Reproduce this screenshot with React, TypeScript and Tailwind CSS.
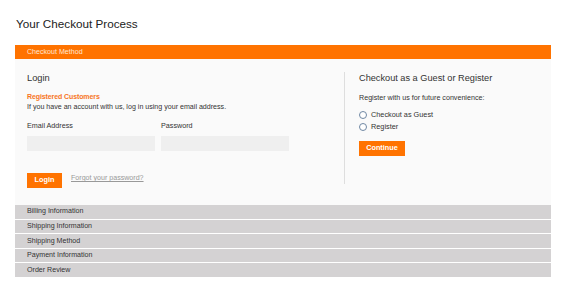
import React from "react";

const steps = [
  "Billing Information",
  "Shipping Information",
  "Shipping Method",
  "Payment Information",
  "Order Review",
];

function Radio({ label }: { label: string }) {
  return (
    <label className="flex items-center gap-[4px] h-[12px]">
      <span className="w-[8px] h-[8px] rounded-full border border-[#6f87a3] bg-white" />
      <span className="text-[7.3px] text-[#333]">{label}</span>
    </label>
  );
}

export default function App() {
  return (
    <div className="w-[568px] h-[298px] bg-white font-['Liberation_Sans',Arial,sans-serif] text-[#333] overflow-hidden">
      <div className="pl-[16px] pt-[17px] h-[45px]">
        <h1 className="text-[11.7px] leading-[14px] text-[#222]">Your Checkout Process</h1>
      </div>

      <div className="ml-[15px] w-[536px]">
        <div className="h-[14px] bg-[#ff7300] pl-[12px] flex items-center">
          <span className="text-[7.1px] text-[#ffe7d2]">Checkout Method</span>
        </div>

        <div className="h-[146px] bg-[#fafafa] flex pt-[13px]">
          <div className="w-[329px] pl-[12px]">
            <h2 className="text-[9.3px] leading-[12px] text-[#333]">Login</h2>
            <p className="mt-[8px] text-[7px] leading-[10px] font-bold tracking-[-0.1px] text-[#f7751e]">Registered Customers</p>
            <p className="text-[7.1px] leading-[10px] text-[#333]">
              If you have an account with us, log in using your email address.
            </p>
            <div className="mt-[9px] flex gap-[6px]">
              <div className="w-[128px]">
                <div className="text-[7.2px] leading-[10px]">Email Address</div>
                <div className="mt-[5px] h-[15px] bg-[#efefef]" />
              </div>
              <div className="w-[128px]">
                <div className="text-[7.2px] leading-[10px]">Password</div>
                <div className="mt-[5px] h-[15px] bg-[#efefef]" />
              </div>
            </div>
            <div className="mt-[22px] flex items-start gap-[9px]">
              <button className="w-[35px] h-[15px] bg-[#ff7300] text-white text-[7.3px] font-bold">Login</button>
              <a className="text-[7.1px] leading-[10px] text-[#999] underline">Forgot your password?</a>
            </div>
          </div>

          <div className="w-px h-[112px] bg-[#dedede]" />

          <div className="pl-[14px]">
            <h2 className="text-[9.2px] leading-[12px] text-[#333]">Checkout as a Guest or Register</h2>
            <p className="mt-[9px] text-[7.15px] leading-[10px]">Register with us for future convenience:</p>
            <div className="mt-[6px] flex flex-col">
              <Radio label="Checkout as Guest" />
              <Radio label="Register" />
            </div>
            <button className="mt-[7px] w-[46px] h-[15px] bg-[#ff7300] text-white text-[7.3px] font-bold">Continue</button>
          </div>
        </div>

        <div className="flex flex-col gap-px">
          {steps.map((s) => (
            <div key={s} className="h-[13.6px] bg-[#d4d2d3] pl-[12px] flex items-center">
              <span className="text-[7.1px] text-[#333]">{s}</span>
            </div>
          ))}
        </div>
      </div>
    </div>
  );
}
